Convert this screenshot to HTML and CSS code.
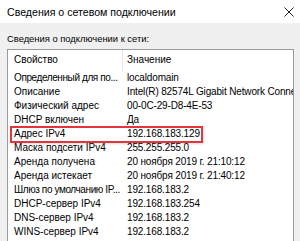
FILE: index.html
```html
<!DOCTYPE html>
<html lang="ru">
<head>
  <meta charset="UTF-8"/>
  <title>Сведения о сетевом подключении</title>
  <link rel="stylesheet" href="styles.css">
</head>
<body>
  <div class="window">
    <div class="titlebar">
      <span class="title">Сведения о сетевом подключении</span>
      <svg class="close" width="10" height="10" viewBox="0 0 10 10">
        <path d="M0.5 0.5 L9.5 9.5 M9.5 0.5 L0.5 9.5" stroke="#222" stroke-width="1" fill="none"/>
      </svg>
    </div>

    <div class="content">
      <div class="caption">Сведения о подключении к сети:</div>

      <div class="list">
        <div class="list-head">
          <div class="cell head-prop">Свойство</div>
          <div class="cell head-val">Значение</div>
        </div>

        <div class="row"><div class="cell prop trunc">Определенный для по...</div><div class="cell val">localdomain</div></div>
        <div class="row"><div class="cell prop">Описание</div><div class="cell val">Intel(R) 82574L Gigabit Network Connection</div></div>
        <div class="row"><div class="cell prop">Физический адрес</div><div class="cell val">00-0C-29-D8-4E-53</div></div>
        <div class="row"><div class="cell prop">DHCP включен</div><div class="cell val">Да</div></div>
        <div class="row marked">
          <div class="cell prop">Адрес IPv4</div><div class="cell val">192.168.183.129</div>
          <span class="mark"></span>
        </div>
        <div class="row"><div class="cell prop">Маска подсети IPv4</div><div class="cell val">255.255.255.0</div></div>
        <div class="row"><div class="cell prop">Аренда получена</div><div class="cell val">20 ноября 2019 г. 21:10:12</div></div>
        <div class="row"><div class="cell prop">Аренда истекает</div><div class="cell val">20 ноября 2019 г. 21:40:12</div></div>
        <div class="row"><div class="cell prop trunc">Шлюз по умолчанию IP...</div><div class="cell val">192.168.183.2</div></div>
        <div class="row"><div class="cell prop">DHCP-сервер IPv4</div><div class="cell val">192.168.183.254</div></div>
        <div class="row"><div class="cell prop">DNS-сервер IPv4</div><div class="cell val">192.168.183.2</div></div>
        <div class="row"><div class="cell prop">WINS-сервер IPv4</div><div class="cell val">192.168.183.2</div></div>
      </div>
    </div>
  </div>
</body>
</html>
```

FILE: styles.css
```css
* {
  box-sizing: border-box;
}

body {
  margin: 0;
  width: 300px;
  height: 241px;
  overflow: hidden;
  background: #f0f0f0;
  font-family: 'Liberation Sans', Arial, sans-serif;
  color: #000;
}

.titlebar {
  height: 23px;
  background: #fff;
  display: flex;
  align-items: center;
  justify-content: space-between;
  padding: 0 6px 0 7px;
}

.title {
  font-size: 10.6px;
}

.close {
  display: block;
}

.content {
  padding: 8px 6px 0 7px;
}

.caption {
  font-size: 9.4px;
  line-height: 16px;
  margin-bottom: 2px;
}

.list {
  background: #fff;
  border: 1px solid #9a9a9a;
  border-bottom: none;
  height: 200px;
  font-size: 10px;
}

.list-head,
.row {
  display: grid;
  grid-template-columns: 115px 1fr;
  white-space: nowrap;
}

.list-head {
  height: 21px;
  line-height: 20px;
}

.row {
  position: relative;
  height: 14px;
  line-height: 14px;
}

.cell {
  overflow: hidden;
}

.head-prop,
.prop {
  padding-left: 6px;
}

.prop.trunc {
  letter-spacing: -0.4px;
}

.head-prop {
  border-right: 1px solid #e5e5e5;
}

.head-val,
.val {
  padding-left: 4px;
}

.val {
  letter-spacing: -0.15px;
}

.mark {
  position: absolute;
  left: 2px;
  top: -1px;
  width: 193px;
  height: 17px;
  border: 2px solid #e2363c;
  box-shadow: 1px 1px 2px rgba(0, 0, 0, 0.15);
}
```
